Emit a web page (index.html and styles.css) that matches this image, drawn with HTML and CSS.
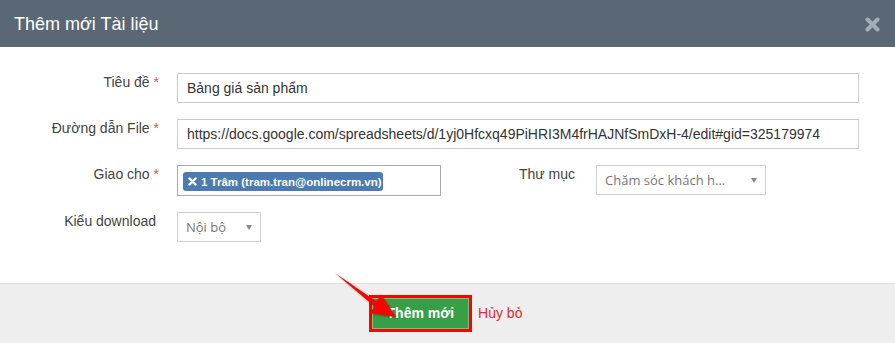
FILE: index.html
```html
<!DOCTYPE html>
<html>
<head>
  <meta charset="utf-8">
  <title>Thêm mới Tài liệu</title>
  <link rel="stylesheet" href="styles.css">
</head>
<body>
  <div class="modal">
    <div class="modal-header">
      <h3 class="modal-title">Thêm mới Tài liệu</h3>
      <span class="close">
        <svg width="15" height="15" viewBox="0 0 15 15"><path d="M2.5 2.5 L12.5 12.5 M12.5 2.5 L2.5 12.5" stroke="#a4adb6" stroke-width="4" stroke-linecap="round"/></svg>
      </span>
    </div>

    <div class="modal-body">
      <div class="form-row">
        <label class="control-label">Tiêu đề <span class="req">*</span></label>
        <input type="text" class="form-control" value="Bảng giá sản phẩm">
      </div>

      <div class="form-row">
        <label class="control-label">Đường dẫn File <span class="req">*</span></label>
        <input type="text" class="form-control" value="https://docs.google.com/spreadsheets/d/1yj0Hfcxq49PiHRI3M4frHAJNfSmDxH-4/edit#gid=325179974">
      </div>

      <div class="form-row">
        <label class="control-label">Giao cho <span class="req">*</span></label>
        <div class="tag-box">
          <span class="tag">
            <svg class="tag-x" width="9" height="9" viewBox="0 0 9 9"><path d="M1.5 1.5 L7.5 7.5 M7.5 1.5 L1.5 7.5" stroke="#fff" stroke-width="2.4" stroke-linecap="round"/></svg>
            1 Trâm (tram.tran@onlinecrm.vn)
          </span>
        </div>
        <label class="control-label label-second">Thư mục</label>
        <div class="select select-folder">
          <span>Chăm sóc khách h...</span>
          <i class="caret"></i>
        </div>
      </div>

      <div class="form-row">
        <label class="control-label">Kiểu download</label>
        <div class="select select-type">
          <span>Nội bộ</span>
          <i class="caret"></i>
        </div>
      </div>
    </div>

    <div class="modal-footer">
      <span class="highlight">
        <button class="btn-save">Thêm mới</button>
        <svg class="pointer" width="80" height="64" viewBox="0 0 80 64">
          <polygon points="7,8 48.5,36.5 53,29.5 68,52 42,48 46.5,41.5" fill="#f00"/>
        </svg>
      </span>
      <a class="btn-cancel">Hủy bỏ</a>
    </div>
  </div>
</body>
</html>
```

FILE: styles.css
```css
* {
  margin: 0;
  padding: 0;
  box-sizing: border-box;
}

body {
  font-family: "Liberation Sans", Arial, sans-serif;
  font-size: 14px;
  color: #333;
  background: #fff;
  overflow: hidden;
}

.modal-header {
  display: flex;
  justify-content: space-between;
  align-items: center;
  height: 47px;
  padding: 0 15px 0 14px;
  background-color: #5a6876;
}

.modal-title {
  font-size: 18px;
  font-weight: normal;
  line-height: 20px;
  color: #fff;
  margin-top: 1px;
}

.close {
  display: flex;
  margin-top: 1px;
}

.modal-body {
  padding: 26px 36px 41px 0;
}

.form-row {
  display: flex;
  align-items: flex-start;
  margin-bottom: 16px;
}

.form-row:last-child {
  margin-bottom: 0;
}

.control-label {
  flex: 0 0 177px;
  padding: 1px 21px 0 0;
  text-align: right;
  line-height: 17px;
  color: #444;
}

.req {
  color: #e5534b;
  margin-right: -3px;
}

.form-control {
  flex: 1;
  height: 30px;
  padding: 0 9px;
  border: 1px solid #ccc;
  font-family: inherit;
  font-size: 14px;
  line-height: 28px;
  color: #333;
  outline: none;
}

.tag-box {
  flex: 0 0 264px;
  height: 31px;
  padding: 6px 5px;
  border: 1px solid #aaa;
}

.tag {
  display: inline-flex;
  align-items: center;
  gap: 4px;
  height: 19px;
  width: 200px;
  padding: 0 5px;
  background-color: #4b7bb0;
  border-radius: 3px;
  color: #fff;
  font-weight: bold;
  font-size: 11.5px;
  white-space: nowrap;
}

.tag-x {
  flex: none;
}

.label-second {
  flex: 0 0 155px;
}

.select {
  display: flex;
  justify-content: space-between;
  align-items: center;
  height: 30px;
  padding: 0 8px 1px 8px;
  border: 1px solid #d0d0d0;
  font-family: "Open Sans", sans-serif;
  font-size: 13px;
  color: #777;
}

.select-folder {
  width: 170px;
}

.select-type {
  width: 84px;
}

.caret {
  width: 0;
  height: 0;
  border-left: 3px solid transparent;
  border-right: 3px solid transparent;
  border-top: 5px solid #8a8a8a;
  margin-top: 2px;
}

.modal-footer {
  display: flex;
  justify-content: center;
  align-items: flex-start;
  gap: 6px;
  height: 60px;
  padding: 11px 4px 0 0;
  background-color: #eee;
  border-top: 1px solid #e0e0e0;
}

.highlight {
  position: relative;
  display: inline-block;
  border: 3px solid #f00;
}

.btn-save {
  display: block;
  height: 31px;
  padding: 0 14px;
  background-color: #37a046;
  border: 1px solid #78c07f;
  color: #fff;
  font-family: inherit;
  font-size: 14px;
  font-weight: bold;
  line-height: 29px;
}

.pointer {
  position: absolute;
  left: -44px;
  top: -33px;
  filter: drop-shadow(1px 1px 1px rgba(0, 0, 0, 0.35));
}

.btn-cancel {
  margin-top: 10px;
  line-height: 17px;
  color: #e52a2a;
}
```
